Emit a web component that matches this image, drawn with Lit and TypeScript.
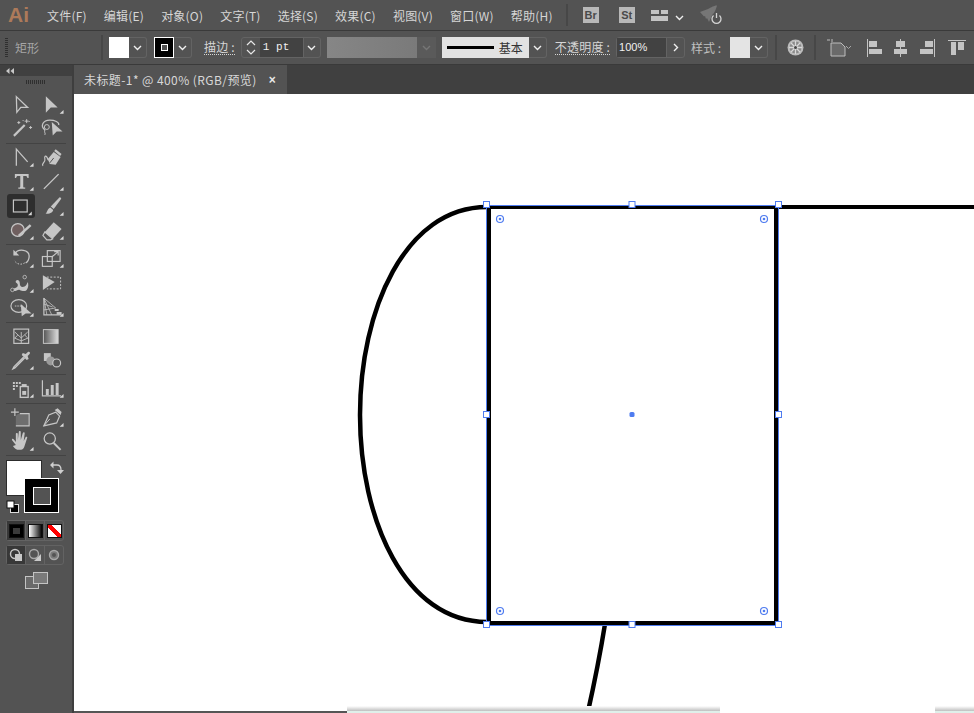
import { LitElement, html, css, svg } from 'lit';
import { customElement } from 'lit/decorators.js';

const menus = ['文件(F)', '编辑(E)', '对象(O)', '文字(T)', '选择(S)', '效果(C)', '视图(V)', '窗口(W)', '帮助(H)'];

const C = '#c6c6c6';

// tools sit in a 30x24 cell, the little corner triangle is added when "more" is set
const toolRows = [
  [
    [
      { more: false, icon: svg`<path d="M9.5 4.5 21 15.5h-7l-4 5z" fill="none" stroke=${C} stroke-width="1.3"/>` },
      { more: true, icon: svg`<path d="M9 4 21 15.5h-7L9 21z" fill=${C}/>` },
    ],
    [
      { more: false, icon: svg`<path d="M7 20 18 9" stroke=${C} stroke-width="2.2"/><path d="M20 3v4M18 5h4M12 5v3M10.500 6.500h3M24 10v3M22.500 11.500h3M16 4l1 1M23 5l-1 1" stroke=${C}/>` },
      { more: false, icon: svg`<path d="M8 14C3 10 6 4 13 4c5 0 10 2 9 5" fill="none" stroke=${C} stroke-width="1.300"/><path d="M8 14c-1 3 1 3 0 5" fill="none" stroke=${C}/><circle cx="10" cy="11" r="2.500" fill="none" stroke=${C}/><path d="M15 6 26 15.500h-6l-4 4z" fill=${C}/>` },
    ],
  ],
  [
    [
      { more: true, icon: svg`<path d="M9.500 21V4L21 17" fill="none" stroke=${C} stroke-width="1.300"/>` },
      { more: false, icon: svg`<path d="M6 21c-2-3 3-3 2-7-.5-2 0-4 2-2 1 1 .5 3 2 3" fill="none" stroke=${C} stroke-width="1.200"/><path d="M11 14 17 7l7 5-5 8-6-1z" fill=${C}/><path d="M19 4l6 5-1.500 2-6-5z" fill=${C}/><path d="M13 18l4-5" stroke="#535353"/>` },
    ],
    [
      { more: true, icon: svg`<path d="M8 5h14v4h-1.300c-.3-1.500-.7-2-2-2H16.500v10.500c0 1 .5 1.200 2 1.200V20h-7v-1.300c1.500 0 2-.2 2-1.200V7h-2.200c-1.300 0-1.700.5-2 2H8z" fill=${C}/>` },
      { more: true, icon: svg`<path d="M7 20 22 5" stroke=${C} stroke-width="1.400"/>` },
    ],
    [
      { more: true, icon: svg`<rect x="7" y="5.500" width="15" height="13" fill="none" stroke=${C} stroke-width="1.300"/>` },
      { more: true, icon: svg`<path d="M23 3c1 0 2 1 1.500 2L17 15l-3-2.500z" fill=${C}/><path d="M13.500 13.500l3 2.500c-.5 3-4 4-8 4 2-1 1.500-5 5-6.500z" fill=${C}/>` },
    ],
    [
      { more: true, icon: svg`<circle cx="11" cy="12" r="6.500" fill="#6f5f5f" stroke=${C} stroke-width="1.300"/><path d="M12 18 24 7" stroke=${C} stroke-width="2.600"/>` },
      { more: true, icon: svg`<path d="M8 14 17 4l8 7-9 10z" fill=${C}/><path d="M8 14l8 7-2 1H10l-4-4.500z" fill="none" stroke=${C} stroke-width="1.200"/>` },
    ],
  ],
  [
    [
      { more: true, icon: svg`<path d="M8 8C11 2 23 3 22.500 11c-.3 3-1.500 5-3.500 6" fill="none" stroke=${C} stroke-width="1.300"/><path d="M18 17c-3 2-8 2-10.500-2.500" fill="none" stroke=${C} stroke-dasharray="1.500 1.500"/><path d="M6.500 3.500v6h6z" fill=${C}/>` },
      { more: true, icon: svg`<rect x="5.500" y="10.500" width="10" height="10" fill="none" stroke=${C} stroke-width="1.200"/><rect x="10.500" y="4.500" width="13" height="11" fill="none" stroke=${C} stroke-width="1.200"/><path d="M15 11l6-5M17.500 5.500H21.500V9.500" fill="none" stroke=${C} stroke-width="1.200"/>` },
    ],
    [
      { more: true, icon: svg`<path d="M6 20c0-4 5-2 5-6 0-2-3-2-2-4s4-1 4 2 1 4 3 4c3 0 4-2 5-5 1 2 1 6-1 8s-5 1-7 0-4 2-7 1z" fill=${C}/><circle cx="5.500" cy="19" r="1.800" fill="#535353" stroke=${C} stroke-width=".8"/><circle cx="18" cy="6" r="1.800" fill="#535353" stroke=${C} stroke-width=".8"/>` },
      { more: false, icon: svg`<path d="M6 4 18 11 6 19z" fill=${C}/><path d="M10 6h14v12H10" fill="none" stroke=${C} stroke-dasharray="2 1.500"/>` },
    ],
    [
      { more: true, icon: svg`<ellipse cx="12" cy="11" rx="8" ry="6.500" fill="none" stroke=${C} stroke-width="1.200"/><path d="M8 11h8" stroke=${C} stroke-dasharray="1.500 1"/><path d="M14 9 25 18.500h-6l-4 3z" fill=${C}/>` },
      { more: true, icon: svg`<path d="M7 3v17h18" fill="none" stroke=${C} stroke-width="1.200"/><path d="M7 3 19 13M7 3l3 17M7 3l8 17M7 9l9 3M7 15l12-2" stroke=${C} stroke-width=".8" fill="none"/><path d="M18 14h4v2h-4zM20 17h5v3h-5z" fill=${C}/>` },
    ],
  ],
  [
    [
      { more: false, icon: svg`<rect x="7" y="5" width="15" height="14.500" fill="none" stroke=${C} stroke-width="1.200"/><path d="M14.500 19.500V8M14.500 14 8 8M14.500 14 21 8M14.500 17l-7-3M14.500 17l7-3M11 11l-3 3M18 11l3 3" stroke=${C} stroke-width=".9" fill="none"/>` },
      { more: false, icon: svg`<defs><linearGradient id="grad"><stop offset="0" stop-color="#555"/><stop offset="1" stop-color="#ddd"/></linearGradient></defs><rect x="6.500" y="5.500" width="15" height="14" fill="url(#grad)" stroke=${C}/>` },
    ],
    [
      { more: true, icon: svg`<path d="M17 9 7 19l-1 2 2-1L18 10" fill="none" stroke=${C} stroke-width="1.300"/><path d="M16 5l3 1 2-2c2-1 3 1 2 2l-2 2 1 3-2 1-5-5z" fill=${C}/>` },
      { more: false, icon: svg`<path d="M7 5h7v8H7z" fill=${C}/><circle cx="14" cy="13" r="4.500" fill="#9a9a9a"/><circle cx="20" cy="15" r="4" fill="#535353" stroke=${C} stroke-width="1.200"/>` },
    ],
  ],
  [
    [
      { more: true, icon: svg`<path d="M6 6h2v2H6zM9 6h2v2H9zM12 6h2v2h-2zM6 9h2v2H6zM9 9h2v2H9zM6 12h2v2H6z" fill=${C}/><path d="M15 8h5v3h-5z" fill=${C}/><rect x="13.500" y="10.500" width="8" height="11" fill="none" stroke=${C} stroke-width="1.400"/><rect x="15.500" y="15" width="4" height="4" fill=${C}/>` },
      { more: true, icon: svg`<path d="M5.500 4v16h19" fill="none" stroke=${C} stroke-width="1.200"/><path d="M9 13h3v6H9zM14 9h3v10h-3zM19 7h3v12h-3z" fill=${C}/>` },
    ],
  ],
  [
    [
      { more: false, icon: svg`<path d="M8 3v8M4 7h8" stroke=${C} stroke-width="1.200"/><path d="M11 9h11v12H9V11z" fill="#6e6e6e"/><path d="M13 8.500h9.500v12.500H9" fill="none" stroke=${C} stroke-width="1.200"/>` },
      { more: true, icon: svg`<path d="M7 21 12 10l7-3 4 4-3 7z" fill="none" stroke=${C} stroke-width="1.200"/><path d="M18 5l6 5 1-3-4-4z" fill=${C}/><path d="M7 21l6-7" stroke=${C}/>` },
    ],
    [
      { more: true, icon: svg`<path d="M9 16 5 11c0-1.500 1-1.500 2-.5l2 2.500 0-8c0-1.500 2-1.500 2 0v6l1-8c0-1.500 2-1.500 2 0l0 8 2-7c.5-1.500 2-1 2 0l-1 8 2-4c1-1 2 0 1.500 1l-3 9c-.7 2-2 3-5 3s-4.500-1-6.500-4z" fill=${C}/>` },
      { more: false, icon: svg`<circle cx="13" cy="9.500" r="5.700" fill="none" stroke=${C} stroke-width="1.300"/><path d="M17 14l7 7" stroke=${C} stroke-width="2"/>` },
    ],
  ],
];

const chevron = html`<svg width="9" height="6" viewBox="0 0 9 6"><path d="M1 1l3.500 3.500L8 1" fill="none" stroke="#f0f0f0" stroke-width="1.400"/></svg>`;
const dimChevron = html`<svg width="9" height="6" viewBox="0 0 9 6"><path d="M1 1l3.500 3.500L8 1" fill="none" stroke="#767676" stroke-width="1.400"/></svg>`;

@customElement('tool-panel')
export class ToolPanel extends LitElement {
  static styles = css`
    :host {
      display: block;
      width: 72px;
      background: #535353;
      border-right: 2px solid #3e3e3e;
      box-sizing: content-box;
    }

    .head {
      height: 11px;
      background: #404040;
      color: #c8c8c8;
      display: flex;
      align-items: center;
      padding-left: 6px;
    }

    .head svg {
      display: block;
    }

    .grip {
      width: 20px;
      height: 4px;
      margin: 4px 0 0 26px;
      background: repeating-linear-gradient(90deg, #2f2f2f 0 1px, transparent 1px 2px);
    }

    .groups {
      padding-top: 7px;
    }

    .group {
      margin: 0 6px 0 6px;
      padding: 1px 0 2px 1px;
      border-bottom: 1px solid #434343;
    }

    .row {
      display: flex;
      height: 24.4px;
    }

    .tool {
      width: 30px;
      height: 24px;
      display: block;
    }

    .active {
      background: #2e2e2e;
      border-radius: 3px;
      width: 28px;
      margin-right: 2px;
    }

    .colors {
      position: relative;
      height: 56px;
      margin-top: 4px;
    }

    .fill {
      position: absolute;
      left: 6px;
      top: 0;
      width: 34px;
      height: 34px;
      background: #fff;
      border: 1px solid #2c2c2c;
    }

    .stroke {
      position: absolute;
      left: 24px;
      top: 18px;
      width: 33px;
      height: 33px;
      background: #000;
      border: 1px solid #fff;
      display: flex;
      align-items: center;
      justify-content: center;
    }

    .stroke-in {
      width: 16px;
      height: 16px;
      background: #535353;
      border: 1px solid #fff;
    }

    .swap {
      position: absolute;
      left: 50px;
      top: 1px;
    }

    .mini {
      position: absolute;
      left: 6px;
      top: 40px;
    }

    .modes {
      display: flex;
      margin: 4px 0 0 6px;
      width: 58px;
      height: 21px;
      border: 1px solid #636363;
      border-radius: 3px;
      box-sizing: border-box;
      align-items: center;
    }

    .modes.draw {
      height: 20px;
      margin-top: 4px;
    }

    .cell {
      flex: 1;
      height: 100%;
      display: flex;
      align-items: center;
      justify-content: center;
      border-right: 1px solid #636363;
    }

    .cell:last-child {
      border-right: none;
    }

    .cell.on {
      background: #383838;
    }

    .sw {
      width: 13px;
      height: 12px;
      border: 1px solid #111;
      display: block;
    }

    .sw.solid {
      background: #000;
      display: flex;
      align-items: center;
      justify-content: center;
    }

    .sw.solid i {
      width: 7px;
      height: 6px;
      background: #3a3a3a;
    }

    .sw.gradient {
      background: linear-gradient(90deg, #fff, #000);
    }

    .sw.none {
      background: linear-gradient(135deg, #fff 0 38%, #f00 38% 62%, #fff 62%);
      transform: scaleX(-1);
    }

    .screen {
      display: block;
      margin: 7px 0 0 25px;
    }
  `;

  private renderTool(t: any, active: boolean) {
    return html`<svg class="tool ${active ? 'active' : ''}" viewBox="0 0 30 24">
      ${t.icon}
      ${t.more ? svg`<path d="M23 22h4v-4z" fill="#d8d8d8"/>` : ''}
    </svg>`;
  }

  render() {
    return html`
      <div class="head">
        <svg width="8" height="6" viewBox="0 0 8 6"><path d="M3.500 0v6L0 3zM8 0v6L4.500 3z" fill="#c8c8c8"/></svg>
      </div>
      <div class="grip"></div>
      <div class="groups">
        ${toolRows.map((group, g) => html`<div class="group">
          ${group.map((row, r) => html`<div class="row">
            ${row.map((t, c) => this.renderTool(t, g === 1 && r === 2 && c === 0))}
          </div>`)}
        </div>`)}
      </div>
      <div class="colors">
        <div class="fill"></div>
        <div class="stroke"><div class="stroke-in"></div></div>
        <svg class="swap" width="14" height="14" viewBox="0 0 14 14">
          <path d="M1 4h6c3 0 4 2 4 5" fill="none" stroke="#cfcfcf" stroke-width="1.300"/>
          <path d="M4 0.500v7L0.500 4zM7.500 9h7L11 13z" fill="#cfcfcf" transform="translate(-.5 0)"/>
        </svg>
        <svg class="mini" width="13" height="13" viewBox="0 0 13 13">
          <rect x="4.500" y="4.500" width="8" height="8" fill="#000" stroke="#ddd"/>
          <rect x="1" y="1" width="7" height="7" fill="#fff" stroke="#111"/>
        </svg>
      </div>
      <div class="modes">
        <div class="cell on"><span class="sw solid"><i></i></span></div>
        <div class="cell"><span class="sw gradient"></span></div>
        <div class="cell"><span class="sw none"></span></div>
      </div>
      <div class="modes draw">
        <div class="cell on">
          <svg width="14" height="14" viewBox="0 0 14 14"><circle cx="6" cy="6" r="4.500" fill="#383838" stroke="#c8c8c8" stroke-width="1.400"/><rect x="6" y="6" width="7" height="7" fill="#c8c8c8"/></svg>
        </div>
        <div class="cell">
          <svg width="14" height="14" viewBox="0 0 14 14"><circle cx="6" cy="6" r="4.500" fill="#535353" stroke="#a8a8a8" stroke-width="1.400"/><path d="M6 13l7-7v7z" fill="#c8c8c8"/></svg>
        </div>
        <div class="cell">
          <svg width="12" height="12" viewBox="0 0 12 12"><circle cx="6" cy="6" r="4.500" fill="#7a7a7a" stroke="#a8a8a8" stroke-width="1.400"/><circle cx="6" cy="6" r="2" fill="#535353"/></svg>
        </div>
      </div>
      <svg class="screen" width="23" height="17" viewBox="0 0 23 17">
        <rect x=".5" y="4.500" width="13" height="12" fill="#6a6a6a" stroke="#c4c4c4"/>
        <rect x="8.500" y=".5" width="14" height="11" fill="#7a7a7a" stroke="#c4c4c4"/>
      </svg>
    `;
  }
}

@customElement('top-bars')
export class TopBars extends LitElement {
  static styles = css`
    :host {
      display: block;
      font-family: "Noto Sans CJK SC", "Liberation Sans", sans-serif;
      font-size: 12px;
      color: #d6d6d6;
      background: #535353;
    }

    .menu {
      height: 30px;
      display: flex;
      align-items: center;
      border-bottom: 1px solid #3a3a3a;
      box-sizing: content-box;
    }

    .logo {
      width: 47px;
      box-sizing: border-box;
      padding-left: 8px;
      font: bold 21px "Liberation Sans", sans-serif;
      color: #ad7a5a;
    }

    .menu-items {
      display: flex;
      gap: 17px;
      letter-spacing: .22px;
    }

    .menu-right {
      display: flex;
      align-items: center;
      margin-left: 13px;
    }

    .vsep {
      width: 2px;
      height: 22px;
      background: #474747;
    }

    .badge {
      width: 16px;
      height: 16px;
      background: #b8b8b8;
      color: #4a4a4a;
      font: bold 11px "Liberation Sans", sans-serif;
      display: flex;
      align-items: center;
      justify-content: center;
      margin-left: 20px;
    }

    .badge.first {
      margin-left: 15px;
    }

    .workspace {
      margin-left: 16px;
      display: block;
    }

    .ws-chevron {
      margin-left: 7px;
      display: block;
    }

    .rocket {
      margin-left: 16px;
      display: block;
    }

    .controls {
      height: 33px;
      display: flex;
      align-items: center;
      border-bottom: 1px solid #3a3a3a;
      box-sizing: content-box;
    }

    .ctl-grip {
      width: 3px;
      height: 19px;
      margin-left: 5px;
      background: repeating-linear-gradient(0deg, #2f2f2f 0 1px, transparent 1px 2px);
    }

    .kind {
      margin-left: 7px;
      width: 24px;
      color: #a6a6a6;
    }

    .sep {
      width: 2px;
      height: 25px;
      background: #474747;
    }

    .sep-kind {
      margin-left: 62px;
    }

    .combo {
      display: flex;
      align-items: stretch;
      height: 21px;
      border: 1px solid #636363;
      border-left: none;
      border-radius: 3px;
      box-sizing: border-box;
    }

    .swatch {
      width: 20px;
      background: #fff;
      margin: -1px 0;
    }

    .swatch.soft {
      background: #e4e4e4;
    }

    .swatch.black {
      background: #000;
      box-shadow: inset 0 0 0 1px #fff;
      display: flex;
      align-items: center;
      justify-content: center;
    }

    .swatch.black i {
      width: 5px;
      height: 5px;
      background: #535353;
      border: 1px solid #fff;
    }

    .arrow {
      width: 17px;
      display: flex;
      align-items: center;
      justify-content: center;
    }

    .fill-combo {
      margin-left: 6px;
    }

    .stroke-combo {
      margin-left: 7px;
    }

    .style-combo {
      margin-left: 9px;
    }

    .lbl {
      margin-left: 12px;
      line-height: 14px;
      border-bottom: 1px dotted #d6d6d6;
      white-space: nowrap;
      letter-spacing: .2px;
    }

    .plain {
      margin-left: 6px;
      color: #c0c0c0;
      white-space: nowrap;
    }

    .stepper {
      margin-left: 6px;
      width: 80px;
      height: 21px;
      display: flex;
      border: 1px solid #636363;
      border-radius: 3px;
      box-sizing: border-box;
    }

    .spin {
      width: 18px;
      display: flex;
      align-items: center;
      justify-content: center;
    }

    .num {
      flex: 1;
      background: #424242;
      padding-left: 3px;
      font: 11px/19px "Liberation Mono", monospace;
      color: #f0f0f0;
      border-right: 1px solid #636363;
    }

    .stepper .arrow {
      width: 16px;
    }

    .brush {
      margin-left: 6px;
      width: 90px;
      height: 21px;
      background: linear-gradient(90deg, #868686, #7a7a7a);
    }

    .brush-arrow {
      width: 19px;
      height: 21px;
      background: #5a5a5a;
      display: flex;
      align-items: center;
      justify-content: center;
    }

    .line-combo {
      margin-left: 6px;
    }

    .line {
      width: 87px;
      background: #e2e2e2;
      margin: -1px 0;
      display: flex;
      align-items: center;
      padding-left: 5px;
      box-sizing: border-box;
      color: #333;
    }

    .line i {
      width: 47px;
      height: 3px;
      background: #000;
      margin-right: 5px;
    }

    .opacity-lbl {
      margin-left: 8px;
    }

    .opacity {
      margin-left: 6px;
      width: 69px;
      height: 21px;
      display: flex;
      border: 1px solid #636363;
      border-radius: 3px;
      box-sizing: border-box;
    }

    .opacity .num {
      padding-left: 2px;
      font: 11px/19px "Liberation Sans", sans-serif;
    }

    .globe {
      margin-left: 10px;
      display: block;
    }

    .sep-style {
      margin-left: 7px;
    }

    .sep-globe {
      margin-left: 10px;
    }

    .shape-icon {
      margin-left: 11px;
      display: block;
    }

    .align {
      display: block;
    }

    .a1 {
      margin-left: 15px;
    }

    .a2 {
      margin-left: 11px;
    }

    .a3 {
      margin-left: 12px;
    }

    .a4 {
      margin-left: 13px;
    }

    .tabs {
      height: 29px;
      background: #404040;
      display: flex;
      padding-left: 74px;
    }

    .tab {
      width: 213px;
      box-sizing: border-box;
      background: #535353;
      display: flex;
      align-items: center;
      padding-left: 10px;
      color: #d8d8d8;
      white-space: nowrap;
      letter-spacing: .42px;
    }

    .tab-close {
      margin-left: 12px;
      font: bold 12px "Liberation Sans", sans-serif;
      color: #e8e8e8;
    }
  `;

  render() {
    return html`
      <div class="menu">
        <div class="logo">Ai</div>
        <div class="menu-items">${menus.map(m => html`<span>${m}</span>`)}</div>
        <div class="menu-right">
          <div class="vsep"></div>
          <div class="badge first">Br</div>
          <div class="badge">St</div>
          <svg class="workspace" width="17" height="11" viewBox="0 0 17 11">
            <path d="M0 0h8v4H0zM10 0h7v4h-7zM0 6h17v5H0z" fill="#c4c4c4"/>
          </svg>
          <span class="ws-chevron">${chevron}</span>
          <svg class="rocket" width="24" height="20" viewBox="0 0 24 20">
            <path d="M0 7 8 4c3-2 8-4 9-3.500-.5 2-2 7-5 10L9 17l-2-4-1 1-1-3-1 .5z" fill="#767676"/>
            <circle cx="16.500" cy="13" r="5" fill="#535353"/>
            <path d="M13.500 10.500a4.500 4.500 0 1 0 6 0" fill="none" stroke="#d4d4d4" stroke-width="1.300"/>
            <path d="M16.500 8v5" stroke="#d4d4d4" stroke-width="1.300"/>
          </svg>
        </div>
      </div>

      <div class="controls">
        <div class="ctl-grip"></div>
        <div class="kind">矩形</div>
        <div class="sep sep-kind"></div>
        <div class="combo fill-combo"><div class="swatch"></div><div class="arrow">${chevron}</div></div>
        <div class="combo stroke-combo"><div class="swatch black"><i></i></div><div class="arrow">${chevron}</div></div>
        <div class="lbl">描边 :</div>
        <div class="stepper">
          <div class="spin">
            <svg width="10" height="15" viewBox="0 0 10 15"><path d="M1 5l4-4 4 4M1 10l4 4 4-4" fill="none" stroke="#e8e8e8" stroke-width="1.200"/></svg>
          </div>
          <div class="num">1 pt</div>
          <div class="arrow">${chevron}</div>
        </div>
        <div class="brush"></div>
        <div class="brush-arrow">${dimChevron}</div>
        <div class="combo line-combo">
          <div class="line"><i></i>基本</div>
          <div class="arrow">${chevron}</div>
        </div>
        <div class="lbl opacity-lbl">不透明度 :</div>
        <div class="opacity">
          <div class="num">100%</div>
          <div class="arrow">
            <svg width="6" height="9" viewBox="0 0 6 9"><path d="M1 1l3.500 3.500L1 8" fill="none" stroke="#f0f0f0" stroke-width="1.400"/></svg>
          </div>
        </div>
        <div class="plain">样式 :</div>
        <div class="combo style-combo"><div class="swatch soft"></div><div class="arrow">${chevron}</div></div>
        <div class="sep sep-style"></div>
        <svg class="globe" width="17" height="17" viewBox="0 0 17 17">
          <circle cx="8.500" cy="8.500" r="8" fill="#bcbcbc"/>
          <circle cx="8.500" cy="8.500" r="6" fill="#8a8a8a"/>
          <path d="M8.500 2v13M2 8.500h13M4 4l9 9M13 4l-9 9" stroke="#d8d8d8" stroke-width="1.300"/>
          <circle cx="8.500" cy="8.500" r="1.500" fill="#444"/>
        </svg>
        <div class="sep sep-globe"></div>
        <svg class="shape-icon" width="25" height="18" viewBox="0 0 25 18">
          <path d="M0 1h3M5 0v3" stroke="#bdbdbd"/>
          <path d="M4 4h10l4 4v9H4z" fill="#6a6a6a" stroke="#bdbdbd"/>
          <path d="M19 7l2.500 2.500L24 7" fill="none" stroke="#a8a8a8"/>
        </svg>
        <svg class="align a1" width="16" height="18" viewBox="0 0 16 18"><path d="M0.500 0v18" stroke="#c4c4c4"/><path d="M2 2h8v6H2zM2 10h13v5H2z" fill="#c4c4c4"/></svg>
        <svg class="align a2" width="14" height="18" viewBox="0 0 14 18"><path d="M6.500 0v18" stroke="#c4c4c4"/><path d="M2 2h9v6H2zM0 10h13v5H0z" fill="#c4c4c4"/></svg>
        <svg class="align a3" width="15" height="18" viewBox="0 0 15 18"><path d="M14.500 0v18" stroke="#c4c4c4"/><path d="M5 2h8v6H5zM0 10h13v5H0z" fill="#c4c4c4"/></svg>
        <svg class="align a4" width="18" height="18" viewBox="0 0 18 18"><path d="M0 1.500h18" stroke="#c4c4c4"/><path d="M3 3h5v13H3zM10 3h6v8h-6z" fill="#c4c4c4"/></svg>
      </div>

      <div class="tabs">
        <div class="tab">未标题-1* @ 400% (RGB/预览)<span class="tab-close">×</span></div>
      </div>
    `;
  }
}

const BLUE = '#4f7cf0';

// artboard contents, in page coordinates
const handles = [
  [486.5, 204.5], [632, 204.5], [778.5, 204.5],
  [486.5, 414.5], [778.5, 414.5],
  [486.5, 624.5], [632, 624.5], [778.5, 624.5],
];
const corners = [[500, 219], [764, 219], [500, 611], [764, 611]];

@customElement('art-board')
export class ArtBoard extends LitElement {
  static styles = css`
    :host {
      display: block;
      flex: 1;
      margin-left: 74px;
      background: #fff;
      overflow: hidden;
    }

    svg {
      display: block;
    }
  `;

  render() {
    return html`
      <svg width="900" height="619" viewBox="74 94 900 619">
        <defs>
          <linearGradient id="shadow" x1="0" y1="0" x2="0" y2="1">
            <stop offset="0" stop-color="#fff"/>
            <stop offset=".68" stop-color="#c2c2c2"/>
            <stop offset=".7" stop-color="#dff0ea"/>
            <stop offset="1" stop-color="#dff0ea"/>
          </linearGradient>
        </defs>
        <g fill="none" stroke="#000" stroke-width="4">
          <path d="M487 207C405 207 360 310 360 415S405 622 487 622" stroke-width="4.500"/>
          <path d="M605 624C600 655 594 685 587 716" stroke-width="4.500"/>
          <rect x="489" y="207" width="287" height="416"/>
          <path d="M778 207H974"/>
        </g>
        <rect x="347" y="706" width="373" height="7" fill="url(#shadow)"/>
        <rect x="935" y="706" width="39" height="7" fill="url(#shadow)"/>
        <rect x="74" y="711" width="273" height="2" fill="#555"/>
        <rect x="486.500" y="205.500" width="292" height="420" fill="none" stroke=${BLUE}/>
        ${corners.map(([x, y]) => svg`
          <circle cx=${x} cy=${y} r="3.500" fill="#fff" stroke=${BLUE} stroke-width="1.200"/>
          <circle cx=${x} cy=${y} r="1.300" fill=${BLUE}/>
        `)}
        ${handles.map(([x, y]) => svg`<rect x=${x - 3} y=${y - 3} width="6" height="6" fill="#fff" stroke=${BLUE}/>`)}
        <rect x="629.500" y="412" width="5" height="5" rx="1.500" fill=${BLUE}/>
      </svg>
    `;
  }
}

@customElement('app-root')
export class AppRoot extends LitElement {
  static styles = css`
    :host {
      display: flex;
      flex-direction: column;
      width: 974px;
      height: 713px;
      overflow: hidden;
      background: #404040;
    }

    .workspace {
      position: relative;
      flex: 1;
      display: flex;
      min-height: 0;
    }

    .panel-layer {
      position: absolute;
      left: 0;
      top: -29px;
      bottom: 0;
      display: flex;
    }
  `;

  render() {
    return html`
      <top-bars></top-bars>
      <div class="workspace">
        <div class="panel-layer"><tool-panel></tool-panel></div>
        <art-board></art-board>
      </div>
    `;
  }
}
